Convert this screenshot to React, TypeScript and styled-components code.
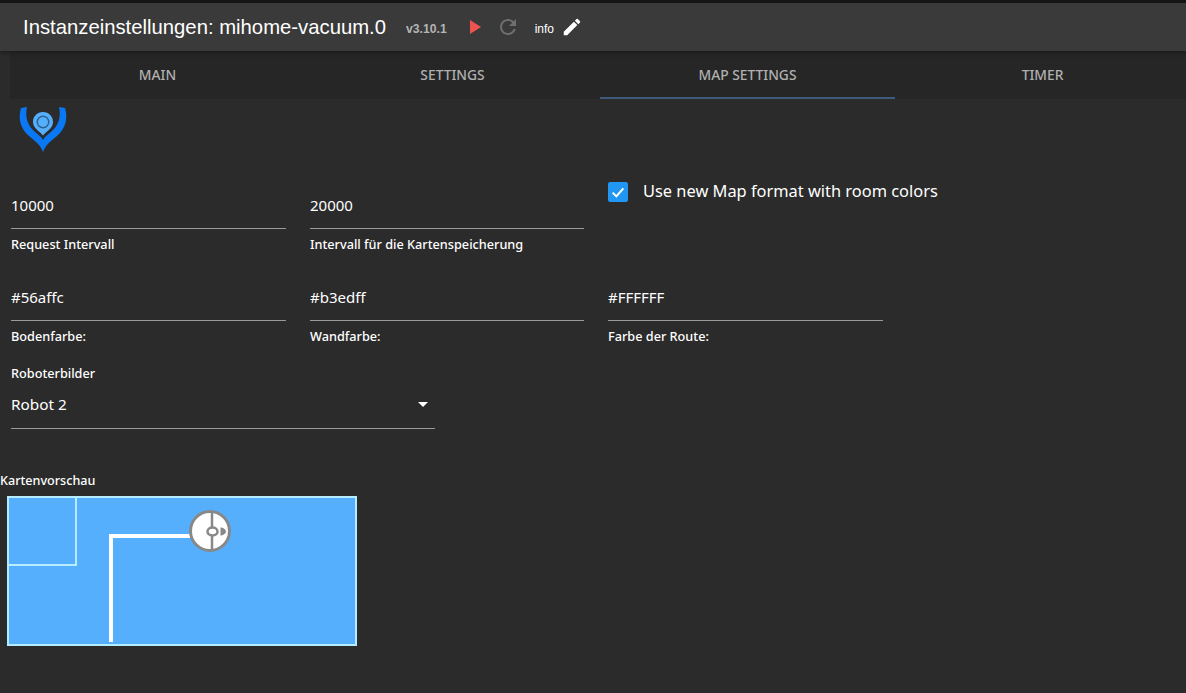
import * as React from 'react';
import styled, { createGlobalStyle } from 'styled-components';

const GlobalStyle = createGlobalStyle`
  html, body {
    margin: 0;
    padding: 0;
    background: #2b2b2b;
  }
  body {
    font-family: 'Noto Sans', 'Liberation Sans', sans-serif;
    color: #fff;
  }
`;

const Page = styled.div`
  width: 1186px;
  height: 693px;
  overflow: hidden;
  background: #2b2b2b;
  border-top: 3px solid #141414;
  box-sizing: border-box;
`;

const Header = styled.div`
  display: flex;
  align-items: center;
  height: 48px;
  padding-left: 23px;
  background: #3a3a3a;
  box-shadow: 0 2px 4px rgba(0, 0, 0, 0.3);
  position: relative;
  font-family: 'Liberation Sans', Arial, sans-serif;
`;

const Title = styled.div`
  font-size: 20.3px;
  line-height: 48px;
  color: #fff;
  margin-right: 20px;
  white-space: nowrap;
`;

const Version = styled.div`
  font-size: 12.2px;
  font-weight: 700;
  color: #b4b4b4;
  margin-right: 21px;
  padding-top: 3px;
`;

const HeaderIcon = styled.svg<{ $gap: number }>`
  display: block;
  flex-shrink: 0;
  margin-right: ${(p) => p.$gap}px;
`;

const InfoText = styled.div`
  font-size: 12px;
  color: #fff;
  margin-right: 7px;
  padding-top: 3px;
`;

const TabBar = styled.div`
  display: flex;
  height: 48px;
  margin-left: 10px;
  background: #262626;
`;

const Tab = styled.div<{ $active?: boolean }>`
  flex: 0 0 295px;
  box-sizing: border-box;
  height: 48px;
  line-height: 48px;
  text-align: center;
  font-size: 13.8px;
  font-weight: 500;
  color: #b0b0b0;
  border-bottom: 2px solid ${(p) => (p.$active ? '#3f5b7c' : 'transparent')};
`;

const Content = styled.div`
  padding-left: 11px;
`;

const Logo = styled.svg`
  display: block;
  margin: 7px 0 0 6px;
`;

const FieldRow = styled.div<{ $top: number }>`
  display: grid;
  grid-template-columns: 275px 274px 275px;
  column-gap: 24px;
  margin-top: ${(p) => p.$top}px;
`;

const FieldValue = styled.div`
  box-sizing: border-box;
  height: 35px;
  font-size: 15px;
  line-height: 22px;
  color: #fff;
  border-bottom: 1px solid #9a9a9a;
`;

const FieldHelp = styled.div`
  margin-top: 7px;
  font-size: 12.7px;
  line-height: 17px;
  font-weight: 500;
  color: #fff;
  white-space: nowrap;
`;

const CheckRow = styled.div`
  display: flex;
  align-items: center;
  gap: 15px;
  height: 20px;
  margin-top: -12px;
  font-size: 16.4px;
  line-height: 18px;
  color: #fff;
  white-space: nowrap;
`;

const CheckBox = styled.div`
  display: flex;
  flex-shrink: 0;
  align-items: center;
  justify-content: center;
  width: 20px;
  height: 20px;
  border-radius: 2px;
  background: #2196f3;
`;

const CheckLabel = styled.span`
  margin-top: -2px;
`;

const SelectField = styled.div`
  width: 424px;
  margin-top: 20px;
`;

const SelectLabel = styled.div`
  font-size: 12.7px;
  line-height: 17px;
  font-weight: 500;
`;

const SelectValue = styled.div`
  box-sizing: border-box;
  display: flex;
  align-items: center;
  justify-content: space-between;
  height: 47px;
  padding: 0 7px 2px 0;
  font-size: 15.3px;
  border-bottom: 1px solid #9a9a9a;
`;

const Caret = styled.div`
  width: 0;
  height: 0;
  border-left: 5px solid transparent;
  border-right: 5px solid transparent;
  border-top: 5px solid #fff;
`;

const PreviewLabel = styled.div`
  margin: 43px 0 0 -11px;
  font-size: 12.6px;
  line-height: 17px;
  font-weight: 500;
`;

const MapCanvas = styled.svg`
  display: block;
  margin: 7px 0 0 -4px;
`;

export default function App() {
  return (
    <Page>
      <GlobalStyle />
      <Header>
        <Title>Instanzeinstellungen: mihome-vacuum.0</Title>
        <Version>v3.10.1</Version>
        <HeaderIcon $gap={14} width="14" height="16" viewBox="0 0 14 16">
          <path d="M2 1 L13 8 L2 15 Z" fill="#ef5350" />
        </HeaderIcon>
        <HeaderIcon $gap={15} width="24" height="24" viewBox="0 0 24 24">
          <path
            fill="#6e6e6e"
            d="M17.65 6.35C16.2 4.9 14.21 4 12 4c-4.42 0-7.99 3.58-7.99 8s3.57 8 7.99 8c3.73 0 6.84-2.55 7.73-6h-2.08c-.82 2.33-3.04 4-5.65 4-3.31 0-6-2.69-6-6s2.69-6 6-6c1.66 0 3.14.69 4.22 1.78L13 11h7V4l-2.35 2.35z"
          />
        </HeaderIcon>
        <InfoText>info</InfoText>
        <HeaderIcon $gap={0} width="22" height="22" viewBox="0 0 24 24">
          <path
            fill="#fff"
            d="M3 17.25V21h3.75L17.81 9.94l-3.75-3.75L3 17.25zM20.71 7.04a1 1 0 0 0 0-1.41l-2.34-2.34a1 1 0 0 0-1.41 0l-1.83 1.83 3.75 3.75 1.83-1.83z"
          />
        </HeaderIcon>
      </Header>
      <TabBar>
        <Tab>MAIN</Tab>
        <Tab>SETTINGS</Tab>
        <Tab $active>MAP SETTINGS</Tab>
        <Tab>TIMER</Tab>
      </TabBar>
      <Content>
        <Logo width="52" height="46" viewBox="0 0 52 46">
          <path
            fill="#0a78f5"
            d="M4 2 L10 1 C8 10 10 18 16 24 C20 28 24 30 26 34 C28 30 32 28 36 24 C42 18 44 10 42 1 L48 2 C51 12 49 22 40 30 C34 35 29 38 26 46 C23 38 18 35 12 30 C3 22 1 12 4 2 Z"
          />
          <path
            fill="#56affc"
            d="M26 6 C32 6 36 10.500 36 16 C36 22 30 25 26 29.500 C22 25 16 22 16 16 C16 10.500 20 6 26 6 Z"
          />
          <circle cx="26" cy="16" r="6.500" fill="#2d5f8f" />
          <circle cx="26" cy="16" r="5" fill="#56affc" />
        </Logo>
        <FieldRow $top={42}>
          <div>
            <FieldValue>10000</FieldValue>
            <FieldHelp>Request Intervall</FieldHelp>
          </div>
          <div>
            <FieldValue>20000</FieldValue>
            <FieldHelp>Intervall für die Kartenspeicherung</FieldHelp>
          </div>
          <CheckRow>
            <CheckBox>
              <svg width="16" height="16" viewBox="0 0 24 24">
                <path
                  d="M4 13 L9.500 18.500 L20 6.500"
                  fill="none"
                  stroke="#fff"
                  strokeWidth="3"
                />
              </svg>
            </CheckBox>
            <CheckLabel>Use new Map format with room colors</CheckLabel>
          </CheckRow>
        </FieldRow>
        <FieldRow $top={33}>
          <div>
            <FieldValue>#56affc</FieldValue>
            <FieldHelp>Bodenfarbe:</FieldHelp>
          </div>
          <div>
            <FieldValue>#b3edff</FieldValue>
            <FieldHelp>Wandfarbe:</FieldHelp>
          </div>
          <div>
            <FieldValue>#FFFFFF</FieldValue>
            <FieldHelp>Farbe der Route:</FieldHelp>
          </div>
        </FieldRow>
        <SelectField>
          <SelectLabel>Roboterbilder</SelectLabel>
          <SelectValue>
            Robot 2
            <Caret />
          </SelectValue>
        </SelectField>
        <PreviewLabel>Kartenvorschau</PreviewLabel>
        <MapCanvas width="350" height="150" viewBox="0 0 350 150">
          <rect x="1" y="1" width="348" height="148" fill="#56affc" stroke="#b3edff" strokeWidth="2" />
          <path d="M1 69 H69 V1" fill="none" stroke="#b3edff" strokeWidth="2" />
          <path d="M104 146 V40 H190" fill="none" stroke="#fff" strokeWidth="4" />
          <circle cx="203" cy="35" r="19.500" fill="#fff" stroke="#888" strokeWidth="3" />
          <path d="M205 15 V55" stroke="#888" strokeWidth="2.500" />
          <ellipse cx="205.500" cy="35.500" rx="5" ry="4" fill="#fff" stroke="#888" strokeWidth="2.500" />
          <path d="M213.500 31.500 C216.500 31.500 219 34 219 35.500 C219 37 216.500 39.500 213.500 39.500 Z" fill="#888" />
        </MapCanvas>
      </Content>
    </Page>
  );
}
